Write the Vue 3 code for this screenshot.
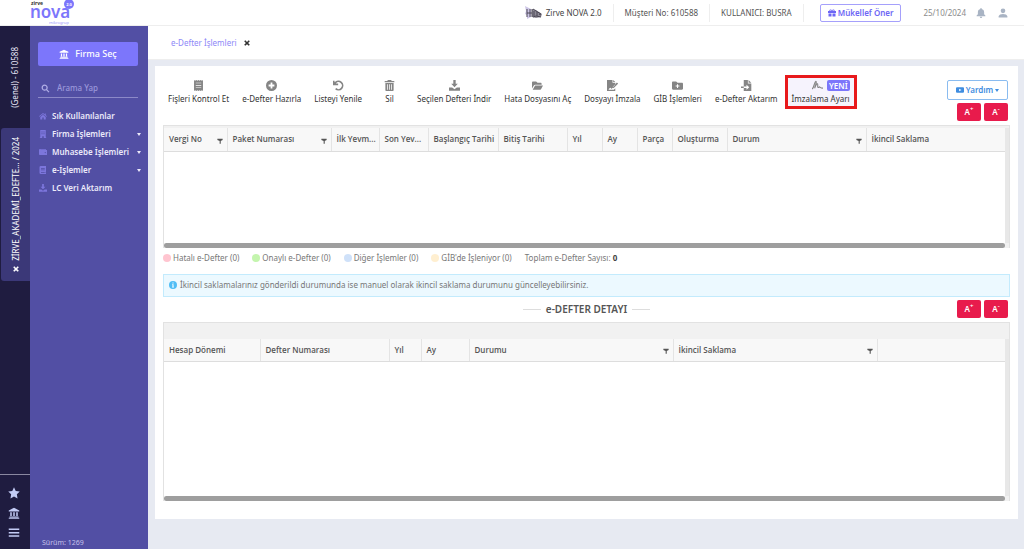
<script setup>
import { ref } from 'vue'

const icons = {
  bank: '<path d="M8 1 1 4.5V6h14V4.5zM3 7v5h2V7zm4 0v5h2V7zm4 0v5h2V7zM2 12.5h12V14H2zM1 14.2h14v1.3H1z"/>',
  search: '<path fill-rule="evenodd" d="M6.5 1a5.5 5.5 0 0 1 4.5 8.6l4 4-1.6 1.6-4-4A5.500 5.500 0 1 1 6.500 1zm0 2.200a3.300 3.300 0 1 0 0 6.600 3.300 3.300 0 0 0 0-6.600z"/>',
  home: '<path d="M8 2 0 8.500l1 1.200 7-5.600 7 5.600 1-1.200-2.500-2V3h-2v1.900zM8 5.400 2.500 9.800V15h4v-4h3v4h4V9.800z"/>',
  building: '<path fill-rule="evenodd" d="M2.500 0h11v14.500h.8V16H9.500v-3.500h-3V16H1.700v-1.500h.8zM5 3v2h2V3zm4 0v2h2V3zM5 6.500v2h2v-2zm4 0v2h2v-2z"/>',
  wallet: '<path fill-rule="evenodd" d="M2 2h12v1.500H3V4h13v10H1.500A1.500 1.500 0 0 1 0 12.500V4a2 2 0 0 1 2-2zm10.500 6a1.200 1.200 0 1 0 0 2.400 1.200 1.200 0 0 0 0-2.400z"/>',
  book: '<path fill-rule="evenodd" d="M3.500 0H14v11.500l-.8.8V14h.8v2H3.500A2.500 2.500 0 0 1 1 13.500v-11A2.500 2.500 0 0 1 3.500 0zM4 4v1.300h7.500V4zm0 3v1.300h7.500V7zm0 5.300V14h7.500v-1.700z"/>',
  download: '<path d="M6.300 0h3.400v5.500h3.100L8 10.600 3.200 5.500h3.100zM0 11h4.600L8 13.300 11.400 11H16v4.500H0z"/>',
  star: '<path d="m8 .4 2.300 4.900 5.400.7-3.900 3.800.9 5.400L8 12.600l-4.700 2.600.9-5.400L.3 6l5.400-.7z"/>',
  bars: '<path d="M1 2h14v2H1zm0 4.500h14v2H1zm0 4.500h14v2H1z"/>',
  bell: '<path d="M7 .8a1 1 0 0 1 2 0v.8c2.500.5 4 2.400 4 5v3.200L15 12v1H1v-1l2-2.200V6.600c0-2.600 1.500-4.500 4-5zM6 14h4a2 2 0 0 1-4 0z"/>',
  user: '<circle cx="8" cy="4.500" r="3.700"/><path d="M1 15v-1.500C1 10.800 5 9.500 8 9.500s7 1.300 7 4V15z"/>',
  gift: '<path fill-rule="evenodd" d="M5 1c1.500 0 2.400 1 3 2 .6-1 1.500-2 3-2 2 0 2.800 1.800 2 3h3v4H0V4h3c-.8-1.200 0-3 2-3zm0 1.400c-.9 0-1 1.600 0 1.600h2c-.6-.9-1.200-1.600-2-1.600zm6 0c-.8 0-1.400.7-2 1.600h2c1 0 .9-1.600 0-1.600zM1 9h6v6H1zm8 0h6v6H9z"/>',
  receipt: '<path fill-rule="evenodd" d="M1.500 0 3 1 4.800 0l1.600 1L8 0l1.600 1 1.600-1L13 1l1.500-1v16L13 15l-1.800 1-1.600-1L8 16l-1.600-1-1.600 1L3 15l-1.500 1zM4 4v.9h8V4zm0 3.400v.9h8v-.9zm0 3.400v.9h8v-.9z"/>',
  plus: '<path fill-rule="evenodd" d="M8 0a8 8 0 1 1 0 16A8 8 0 0 1 8 0zM6.700 3.800v2.900H3.800v2.600h2.900v2.900h2.600V9.300h2.900V6.700H9.300V3.800z"/>',
  undo: '<path d="M0 1h2.300v2.400A7.300 7.300 0 1 1 3 13.500l1.700-1.800A4.800 4.800 0 1 0 4.200 5.200H7.500v2.300H0z"/>',
  trash: '<path fill-rule="evenodd" d="M5.500 0h5l.6 1.300H15v2H1v-2h3.900zM2 4.200h12V14.500c0 .9-.6 1.500-1.500 1.500h-9C2.600 16 2 15.400 2 14.500zM4.600 6v8h1.100V6zm2.900 0v8h1.100V6zm2.900 0v8h1.100V6z"/>',
  folderOpen: '<path d="M0 3.500C0 2.700.6 2 1.500 2H6l2 2h4.500c.9 0 1.500.7 1.500 1.500V7H4.500c-.8 0-1.400.4-1.800 1L0 12.500zM4.500 8H16l-2.700 5.200c-.3.500-.8.800-1.300.8H1z"/>',
  sign: '<path fill-rule="evenodd" d="M0 0h8v4h4v3L7.300 11.500V13C6 13 6 11.200 4.800 11.200c-1 0-1.200 1.800-2.300 1.800v1H10l2-2v4H0zM9 0l3 3H9zM14.400 3.500l1.800 1.800-6 6L8 12l.5-2.300z"/>',
  folderPlus: '<path fill-rule="evenodd" d="M1.500 2H6l2 2h6.500c.9 0 1.500.7 1.500 1.500v7c0 .9-.6 1.500-1.500 1.500h-13A1.500 1.500 0 0 1 0 12.500v-9C0 2.700.6 2 1.500 2zM7.300 6v2H5.300v1.500h2v2h1.500v-2h2V8h-2V6z"/>',
  fileImport: '<path fill-rule="evenodd" d="M4 0h6v5h5v11H4v-4.500h4V14l4-3.500L8 7v2.500H4zm7 0 4 4h-4zM0 9.500h4v2H0z"/>',
  signature: '<path d="M0 13C3 12 3.500 2 5.500 2S4.500 9 3.800 12c1.700-5 3.200-7 4.200-6.500S7.500 11 9 11s1-1.500 2.200-.8 1.300 1.600 4.800 1.600" fill="none" stroke="currentColor" stroke-width="1.600"/>',
  video: '<path fill-rule="evenodd" d="M2 2.500h12a2 2 0 0 1 2 2v7a2 2 0 0 1-2 2H2a2 2 0 0 1-2-2v-7a2 2 0 0 1 2-2zM6.300 5.400v5.200L11 8z"/>',
  info: '<path fill-rule="evenodd" d="M8 0a8 8 0 1 1 0 16A8 8 0 0 1 8 0zM6.800 3v2.200h2.400V3zM6 6.500V8h.8v3.500H6V13h4v-1.500h-.8v-5z"/>',
  close: '<path d="M3.500.5 8 5 12.500.5l3 3L11 8l4.500 4.500-3 3L8 11l-4.500 4.500-3-3L5 8 .5 3.500z"/>',
  filter: '<path d="M1 2h14v3l-5 3v7H7V8L1 5z"/>'
}

const query = ref('')

const menu = [
  { icon: 'home', text: 'Sık Kullanılanlar' },
  { icon: 'building', text: 'Firma İşlemleri', more: true },
  { icon: 'wallet', text: 'Muhasebe İşlemleri', more: true },
  { icon: 'book', text: 'e-İşlemler', more: true },
  { icon: 'download', text: 'LC Veri Aktarım' }
]

const tools = [
  { icon: 'receipt', text: 'Fişleri Kontrol Et' },
  { icon: 'plus', text: 'e-Defter Hazırla' },
  { icon: 'undo', text: 'Listeyi Yenile' },
  { icon: 'trash', text: 'Sil' },
  { icon: 'download', text: 'Seçilen Defteri İndir' },
  { icon: 'folderOpen', text: 'Hata Dosyasını Aç' },
  { icon: 'sign', text: 'Dosyayı İmzala' },
  { icon: 'folderPlus', text: 'GİB İşlemleri' },
  { icon: 'fileImport', text: 'e-Defter Aktarım' },
  { icon: 'signature', text: 'İmzalama Ayarı', badge: 'YENİ' }
]

const ledgerCols = [
  { text: 'Vergi No', w: 63, filter: true },
  { text: 'Paket Numarası', w: 104, filter: true },
  { text: 'İlk Yevm...', w: 48 },
  { text: 'Son Yev...', w: 49 },
  { text: 'Başlangıç Tarihi', w: 70 },
  { text: 'Bitiş Tarihi', w: 69 },
  { text: 'Yıl', w: 35 },
  { text: 'Ay', w: 35 },
  { text: 'Parça', w: 35 },
  { text: 'Oluşturma', w: 55 },
  { text: 'Durum', w: 139, filter: true },
  { text: 'İkincil Saklama' }
]

const detailCols = [
  { text: 'Hesap Dönemi', w: 96 },
  { text: 'Defter Numarası', w: 129 },
  { text: 'Yıl', w: 32 },
  { text: 'Ay', w: 48 },
  { text: 'Durumu', w: 204, filter: true },
  { text: 'İkincil Saklama', w: 204, filter: true },
  { text: '' }
]

const legend = [
  { tone: 'pink', text: 'Hatalı e-Defter (0)' },
  { tone: 'green', text: 'Onaylı e-Defter (0)' },
  { tone: 'blue', text: 'Diğer İşlemler (0)' },
  { tone: 'cream', text: "GİB'de İşleniyor (0)" }
]
</script>

<template>
  <div class="app">
    <header class="top">
      <svg class="logo" viewBox="0 0 48 26" role="img" aria-label="zirve nova 2.0">
        <text x="1" y="5" class="l-zirve">zirve</text>
        <text x="0" y="18" class="l-nova">nova</text>
        <circle cx="39" cy="4" r="5" fill="#7c76fb" />
        <text x="39" y="6" class="l-ver">2.0</text>
        <text x="19" y="24" class="l-sub">mikrogrup</text>
      </svg>
      <div class="top-right">
        <div class="cell product">
          <svg class="mascot" viewBox="0 0 18 14" aria-hidden="true">
            <path d="M0 0l6 3v8l-4 2V9L0 8l1-3z" fill="#cdc6e6" />
            <path d="M7 3l4 1 6 4-1 3-5 1-4-1z" fill="#8d8a96" />
            <path d="M2 3v8M5 3v8M2 7h5M7 3v8M8 3l3 2 5 3M8 11l3-1 5 1M9 5v5M12 6v4M14 8l2 1" stroke="#4b4754" stroke-width="1" fill="none" />
          </svg>
          <span>Zirve NOVA 2.0</span>
        </div>
        <div class="cell">Müşteri No: 610588</div>
        <div class="cell">KULLANICI: BUSRA</div>
        <button class="refer" type="button"><svg class="ic" viewBox="0 0 16 16" v-html="icons.gift" />Mükellef Öner</button>
        <time class="date">25/10/2024</time>
        <button class="plain bell" type="button" aria-label="Bildirimler"><svg class="ic big" viewBox="0 0 16 16" v-html="icons.bell" /></button>
        <button class="plain" type="button" aria-label="Profil"><svg class="ic big" viewBox="0 0 16 16" v-html="icons.user" /></button>
      </div>
    </header>

    <div class="body">
      <nav class="rail" aria-label="Firmalar">
        <button class="rail-tab general" type="button"><span>(Genel) - 610588</span></button>
        <button class="rail-tab active" type="button">
          <svg class="ic tiny" viewBox="0 0 16 16" v-html="icons.close" />
          <span>ZİRVE_AKADEMİ_EDEFTE... / 2024</span>
        </button>
        <div class="rail-foot">
          <button class="plain" type="button" aria-label="Favoriler"><svg class="ic foot" viewBox="0 0 16 16" v-html="icons.star" /></button>
          <button class="plain" type="button" aria-label="Firmalar"><svg class="ic foot" viewBox="0 0 16 16" v-html="icons.bank" /></button>
          <button class="plain" type="button" aria-label="Menü"><svg class="ic foot" viewBox="0 0 16 16" v-html="icons.bars" /></button>
        </div>
      </nav>

      <aside class="side">
        <button class="firm" type="button"><svg class="ic big" viewBox="0 0 16 16" v-html="icons.bank" />Firma Seç</button>
        <label class="search">
          <svg class="ic mid" viewBox="0 0 16 16" v-html="icons.search" />
          <input v-model="query" type="text" placeholder="Arama Yap" aria-label="Arama Yap" />
        </label>
        <ul class="menu">
          <li v-for="m in menu" :key="m.text">
            <a href="#"><svg class="ic" viewBox="0 0 16 16" v-html="icons[m.icon]" /><span>{{ m.text }}</span><i v-if="m.more" class="caret" /></a>
          </li>
        </ul>
        <p class="version">Sürüm: 1269</p>
      </aside>

      <main class="main">
        <div class="tabs">
          <a href="#">e-Defter İşlemleri</a>
          <button class="plain tab-close" type="button" aria-label="Kapat"><svg class="ic tiny" viewBox="0 0 16 16" v-html="icons.close" /></button>
        </div>

        <section class="card">
          <div class="toolbar">
            <div class="tools">
              <button v-for="t in tools" :key="t.text" type="button" :class="['tool', { marked: t.badge }]">
                <span class="tool-top"><svg class="ic tool-ic" viewBox="0 0 16 16" v-html="icons[t.icon]" /><b v-if="t.badge">{{ t.badge }}</b></span>
                <span>{{ t.text }}</span>
              </button>
            </div>
            <div class="help-col">
              <button class="help" type="button"><svg class="ic" viewBox="0 0 16 16" v-html="icons.video" />Yardım<i class="caret" /></button>
              <div class="sizes">
                <button type="button">A<sup>+</sup></button>
                <button type="button">A<sup>-</sup></button>
              </div>
            </div>
          </div>

          <div class="grid ledger">
            <table>
              <colgroup><col v-for="c in ledgerCols" :key="c.text" :style="{ width: c.w ? c.w + 'px' : 'auto' }" /></colgroup>
              <thead><tr><th v-for="c in ledgerCols" :key="c.text" scope="col"><div class="th"><span>{{ c.text }}</span><svg v-if="c.filter" class="ic tiny" viewBox="0 0 16 16" v-html="icons.filter" /></div></th></tr></thead>
            </table>
            <div class="rows" />
            <div class="hbar" />
          </div>

          <div class="legend">
            <span v-for="l in legend" :key="l.text"><i :class="['dot', l.tone]" />{{ l.text }}</span>
            <span>Toplam e-Defter Sayısı:&nbsp;<b>0</b></span>
          </div>

          <p class="notice"><svg class="ic" viewBox="0 0 16 16" v-html="icons.info" />İkincil saklamalarınız gönderildi durumunda ise manuel olarak ikincil saklama durumunu güncelleyebilirsiniz.</p>

          <div class="detail-head">
            <h2>e-DEFTER DETAYI</h2>
            <div class="sizes">
              <button type="button">A<sup>+</sup></button>
              <button type="button">A<sup>-</sup></button>
            </div>
          </div>

          <div class="grid detail">
            <table>
              <colgroup><col v-for="c in detailCols" :key="c.text" :style="{ width: c.w ? c.w + 'px' : 'auto' }" /></colgroup>
              <thead><tr><th v-for="c in detailCols" :key="c.text" scope="col"><div class="th"><span>{{ c.text }}</span><svg v-if="c.filter" class="ic tiny" viewBox="0 0 16 16" v-html="icons.filter" /></div></th></tr></thead>
            </table>
            <div class="rows" />
            <div class="hbar" />
          </div>
        </section>
      </main>
    </div>
  </div>
</template>

<style>
body { margin: 0; background: #e7eaf2; }
</style>

<style scoped>
* { box-sizing: border-box; }
.app { min-height: 100vh; display: flex; flex-direction: column; font: 8px/12px "Noto Sans", "Open Sans", sans-serif; color: #555; }
button, input { font: inherit; color: inherit; margin: 0; }
button { padding: 0; border: 0; background: none; cursor: pointer; }
a { color: inherit; text-decoration: none; }
.ic { width: 8px; height: 8px; flex: none; fill: currentColor; display: block; }
.ic.tiny { width: 6px; height: 6px; }
.ic.mid { width: 9px; height: 9px; }
.ic.big { width: 10px; height: 10px; }
.ic.foot { width: 12px; height: 12px; }
.plain { display: flex; }
.caret { border: 2px solid transparent; border-top: 3px solid currentColor; border-bottom: 0; }

.top { height: 26px; display: flex; justify-content: space-between; background: #fff; border-bottom: 1px solid #eee; }
.logo { width: 48px; height: 26px; margin-left: 30px; }
.l-zirve { font-size: 5px; font-weight: 700; fill: #333; }
.l-nova { font-size: 17px; font-weight: 600; fill: #7c76fb; }
.l-ver { font-size: 4px; font-weight: 700; fill: #fff; text-anchor: middle; }
.l-sub { font-size: 4px; fill: #9a95fa; }
.top-right { display: flex; align-items: center; padding-right: 16px; }
.cell { height: 18px; display: flex; align-items: center; padding: 0 11px; border-right: 1px solid #eee; }
.product { gap: 3px; color: #444; }
.mascot { width: 18px; height: 14px; }
.refer { height: 18px; padding: 0 7px; margin: 0 22px 0 16px; display: flex; align-items: center; gap: 2px; color: #6d66f5; font-weight: 600; border: 1px solid #a5a0fb; border-radius: 2px; }
.date { color: #8b8b8b; }
.bell { margin: 0 12px 0 10px; }
.top-right .plain { color: #a9b4c4; }

.body { flex: 1; display: flex; }
.rail { width: 30px; flex: none; display: flex; flex-direction: column; background: #1f1c40; color: #e6e5f5; }
.rail-tab { display: flex; flex-direction: row-reverse; align-items: center; justify-content: center; gap: 6px; writing-mode: vertical-rl; }
.rail-tab span { transform: rotate(180deg); white-space: nowrap; }
.general { height: 102px; }
.active { height: 153px; margin-left: 1px; background: #3b3878; border-radius: 3px 0 0 3px; color: #fff; }
.rail-foot { margin-top: auto; padding: 12px 8px 10px; display: flex; flex-direction: column; gap: 8px; border-top: 1px solid #8a88a0; color: #c3cbf5; }

.side { width: 118px; flex: none; display: flex; flex-direction: column; padding: 16px 10px 0 8px; background: #524fa4; color: #eceafa; font-weight: 600; }
.firm { height: 24px; display: flex; align-items: center; justify-content: center; gap: 6px; border-radius: 2px; background: #7c76fb; color: #fff; font-size: 9px; font-weight: 500; }
.search { height: 19px; margin-top: 13px; padding-left: 3px; display: flex; align-items: center; gap: 7px; border-bottom: 1px solid #8c89c8; color: #b1aee6; font-weight: 500; }
.search input { min-width: 0; flex: 1; padding: 0; border: 0; outline: 0; background: none; }
.search input::placeholder { color: #9a97da; opacity: 1; }
.menu { list-style: none; margin: 9px 0 0; padding: 0; }
.menu a { height: 18px; display: flex; align-items: center; gap: 5px; padding-left: 1px; margin-right: -5px; white-space: nowrap; }
.menu .ic { color: #7c76dc; }
.menu .caret { margin-left: auto; margin-right: 2px; }
.version { margin: auto 0 0 4px; font-weight: 400; font-size: 7px; color: #c3c0ea; }

.main { flex: 1; min-width: 0; }
.tabs { height: 34px; display: flex; align-items: center; gap: 7px; padding-left: 23px; background: #fff; border-bottom: 1px solid #eee; color: #8d88f7; }
.tab-close { color: #333; }
.card { margin: 6px 6px 0 7px; padding: 9px 8px 18px; background: #fff; }

.toolbar { display: flex; justify-content: space-between; height: 50px; }
.tools { display: flex; align-items: flex-start; gap: 1px; margin-left: -1px; }
.tool { height: 34px; min-width: 41px; padding: 0 6px; color: #333; white-space: nowrap; display: flex; flex-direction: column; justify-content: center; align-items: center; gap: 2px; }
.tool-top { height: 12px; display: flex; align-items: center; gap: 4px; color: #858585; }
.tool-ic { width: 11px; height: 11px; }
.marked { border: 3px solid #e8191c; padding: 0 4px; background: #f6f3fd; }
.marked .tool-top { align-self: flex-end; }
.marked b { padding: 0 2px; height: 11px; line-height: 11px; background: #7c76fb; color: #fff; border-radius: 2px; font-weight: 600; }
.help-col { display: flex; flex-direction: column; align-items: flex-end; gap: 3px; padding: 5px 2px 0 0; }
.help { width: 61px; height: 20px; display: flex; align-items: center; justify-content: center; gap: 2px; border: 1px solid #8abcf0; border-radius: 2px; color: #3f8de0; font-weight: 600; }
.sizes { display: flex; gap: 3px; }
.sizes button { width: 24px; height: 18px; border-radius: 2px; background: #e81b4c; color: #fff; font-weight: 600; line-height: 10px; }
.sizes sup { font-size: 6px; line-height: 0; }

.grid { border: 1px solid #e2e2e2; border-bottom: 0; background: #f1f1f1; display: flex; flex-direction: column; }
.ledger { padding-top: 2px; }
.detail { padding-top: 16px; }
table { width: 100%; table-layout: fixed; border-collapse: collapse; background: #f8f8f8; font-family: "Open Sans", "Noto Sans", sans-serif; }
th { padding: 0 5px; height: 23px; text-align: left; font-weight: 600; color: #555; border-right: 1px solid #e4e4e4; border-bottom: 1px solid #ddd; }
th:last-child { border-right: 4px solid #e8e8e8; }
.th { display: flex; align-items: center; justify-content: space-between; white-space: nowrap; }
.th .ic { color: #555; margin-right: -1px; margin-top: 3px; }
.rows { background: #fff; border-right: 4px solid #e8e8e8; }
.ledger .rows { height: 91px; }
.detail .rows { height: 134px; }
.hbar { height: 5px; margin-right: 4px; border-radius: 3px; background: #9e9e9e; }

.legend { height: 26px; display: flex; align-items: center; padding-bottom: 6px; gap: 13px; color: #777; }
.legend span { display: flex; align-items: center; }
.legend b { color: #444; }
.dot { width: 8px; height: 8px; margin-right: 2px; border-radius: 50%; }
.pink { background: #ffc5d0; }
.green { background: #c4f5ae; }
.blue { background: #cfe1f9; }
.cream { background: #ffefd0; }

.notice { height: 23px; margin: 0; display: flex; align-items: center; gap: 3px; padding-left: 5px; border: 1px solid #c3ebfd; background: #ecf9ff; color: #777; }
.notice .ic { color: #4fbdf5; }
.detail-head { height: 25px; display: grid; grid-template-columns: 1fr auto 1fr; align-items: center; }
.detail-head h2 { grid-column: 2; margin: 0; display: flex; align-items: center; gap: 5px; font-size: 10px; line-height: 14px; font-weight: 600; color: #555; }
.detail-head h2::before, .detail-head h2::after { content: ""; width: 18px; border-top: 1px solid #ddd; }
.detail-head .sizes { justify-self: end; padding-right: 2px; }
</style>
